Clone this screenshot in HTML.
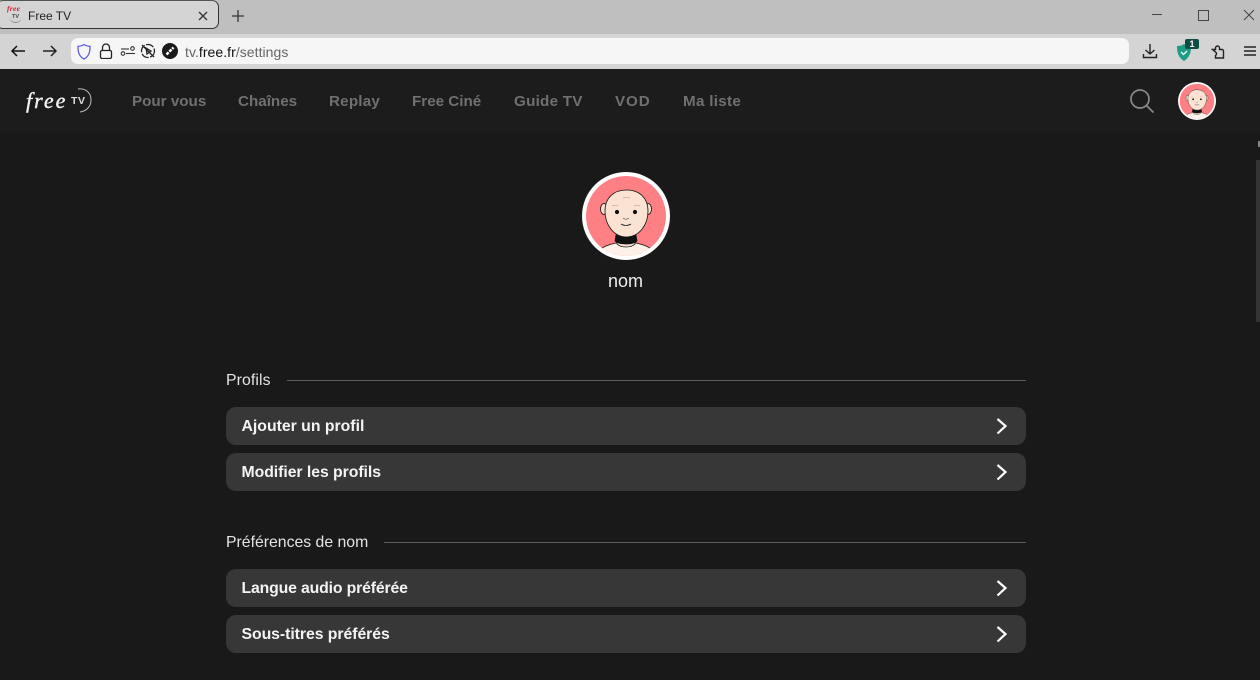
<!DOCTYPE html>
<html lang="fr"><head><meta charset="utf-8"><title>Free TV</title>
<style>
html,body{margin:0;padding:0;width:1260px;height:680px;overflow:hidden;background:#191919;font-family:"Liberation Sans",sans-serif}
.a{position:absolute;white-space:nowrap}
#chrome{position:absolute;left:0;top:0;width:1260px;height:69px;background:#d4d4d4}
#tabbar{position:absolute;left:0;top:0;width:1260px;height:34px;background:#bfbfbf}
#tab{position:absolute;left:-4px;top:0;width:221px;height:27px;background:#d4d4d4;border:1px solid #333;border-top-color:#555;border-radius:7px}
#url{position:absolute;left:71px;top:38px;width:1058px;height:26px;background:#f6f6f6;border-radius:7px}
#hdr{position:absolute;left:0;top:69px;width:1260px;height:64px;background:#1c1c1c;box-sizing:border-box}
.nav{position:absolute;top:92px;font-size:15.2px;line-height:18px;margin-top:1px;font-weight:bold;color:#707070;white-space:nowrap}
.row{position:absolute;left:226px;width:800px;height:38px;background:#373737;border-radius:10px}
.row b{position:absolute;left:15.500px;top:10px;font-size:15.800px;line-height:19px;color:#f4f4f4;white-space:nowrap}
.row svg{position:absolute;left:769px;top:10px}
.sec{position:absolute;left:226px;font-size:15.800px;line-height:18px;color:#e4e4e4;white-space:nowrap}
.ln{position:absolute;height:1px;background:#5a5a5a}
</style></head><body>
<svg width="0" height="0" style="position:absolute"><defs>
<clipPath id="c"><circle cx="44" cy="44" r="40"/></clipPath>
<symbol id="av" viewBox="0 0 88 88">
<circle cx="44" cy="44" r="44" fill="#fff"/>
<circle cx="44" cy="44" r="40" fill="#fe7f84"/>
<g clip-path="url(#c)" stroke="#111" stroke-width=".8">
<path d="M14 88c1-10 6-14 20-17h20c14 3 19 7 20 17z" fill="#fdf0e8"/>
<path d="M35 60h18v12c-4 4-14 4-18 0z" fill="#f9dfcf"/>
<path d="M34 63c5 3 15 3 20 0l1 6c-4 4-18 4-22 0z" fill="#111"/>
<ellipse cx="22" cy="37" rx="3.500" ry="5.500" fill="#f9dfcf"/>
<ellipse cx="66" cy="37" rx="3.500" ry="5.500" fill="#f9dfcf"/>
<path d="M44.500 18c13 0 21.500 8 21.500 21 0 14-9 26-21.500 26S23 53 23 39c0-13 8.500-21 21.500-21z" fill="#fbe3d4"/>
<circle cx="35" cy="40" r="1.700" fill="#111"/><circle cx="53" cy="40" r="1.700" fill="#111"/>
<path d="M41 26c2-.7 5-.7 7 0M30 34c2-1 4-1 6 0M52 34c2-1 4-1 6 0" fill="none" stroke="#c8a898" stroke-width=".7"/>
<path d="M41 46c1 1.500 5 1.500 6 0" fill="none" stroke-width=".5"/>
<path d="M39 52c3 2 7 2 10 0" fill="none" stroke-width=".8"/>
</g></symbol>
<symbol id="chev" viewBox="0 0 14 18"><path d="M2.500 2l8 7-8 7.500" fill="none" stroke="#fff" stroke-width="2.200"/></symbol>
</defs></svg>

<div id="chrome"></div><div id="tabbar"></div><div id="tab"></div>
<div class="a" style="left:7px;top:5px;font:italic bold 7.500px/8px 'Liberation Serif',serif;color:#c4242c;letter-spacing:.3px">free</div>
<div class="a" style="left:10px;top:14px;width:11px;height:8px;font:bold 5.500px/6px 'Liberation Sans',sans-serif;color:#444;text-align:center;border-bottom:1px solid #888;border-radius:50%">TV</div>
<div class="a" style="left:28px;top:9px;font-size:12px;line-height:15px;color:#222">Free TV</div>
<svg class="a" style="left:197px;top:10px" width="12" height="12" fill="none" stroke="#333" stroke-width="1.300"><path d="M2 2l8 8M10 2l-8 8"/></svg>
<svg class="a" style="left:231px;top:9px" width="14" height="14" fill="none" stroke="#333" stroke-width="1.300"><path d="M7 1v12M1 7h12"/></svg>
<svg class="a" style="left:1151px;top:9px" width="12" height="12" fill="none" stroke="#444"><path d="M1 5.500h10"/></svg>
<svg class="a" style="left:1197px;top:9px" width="12" height="12" fill="none" stroke="#444"><rect x="1.500" y="1.500" width="10" height="10"/></svg>
<svg class="a" style="left:1243px;top:9px" width="12" height="12" fill="none" stroke="#444"><path d="M1 1l10 10M11 1L1 11"/></svg>

<svg class="a" style="left:10px;top:44px" width="16" height="14" fill="none" stroke="#111" stroke-width="1.500"><path d="M15 7H2M7 2L2 7l5 5"/></svg>
<svg class="a" style="left:42px;top:44px" width="16" height="14" fill="none" stroke="#222" stroke-width="1.500"><path d="M1 7h13M9 2l5 5-5 5"/></svg>
<div id="url"></div>
<svg class="a" style="left:76px;top:43px" width="16" height="17" fill="none" stroke="#5a5fe0" stroke-width="1.300"><path d="M8 1.500c2 1.300 4 1.800 6 1.800 .2 6-1.500 10.500-6 12.700-4.500-2.200-6.200-6.700-6-12.700 2 0 4-.5 6-1.800z"/></svg>
<svg class="a" style="left:99px;top:43px" width="14" height="16" fill="none" stroke="#222" stroke-width="1.300"><rect x="1.500" y="7.500" width="11" height="8" rx="1.500"/><path d="M3.500 7.500V4.500a3.500 3.500 0 017 0v3"/></svg>
<svg class="a" style="left:120px;top:45px" width="16" height="12" fill="none" stroke="#333" stroke-width="1.100"><path d="M1 4h8"/><circle cx="12.500" cy="3.500" r="1.800"/><circle cx="3" cy="8.500" r="1.800"/><path d="M6 8.500h9"/></svg>
<svg class="a" style="left:140px;top:43px" width="16" height="16" fill="none" stroke="#222" stroke-width="1.300"><circle cx="8" cy="8" r="6.500" stroke-dasharray="8 1.500"/><path d="M2 2l12 12M6 5l5 3-4 3z"/></svg>
<svg class="a" style="left:162px;top:43px" width="16" height="16"><circle cx="8" cy="8" r="8" fill="#1a1a1a"/><path d="M4.500 11.500l7-7" stroke="#fff" stroke-width="2.500" stroke-dasharray="3 1"/></svg>
<div class="a" style="left:185px;top:44px;font-size:14px;line-height:16px;letter-spacing:.05px;color:#666">tv.<span style="color:#111">free.fr</span>/settings</div>

<svg class="a" style="left:1142px;top:43px" width="16" height="16" fill="none" stroke="#222" stroke-width="1.400"><path d="M8 1v10M3.500 7L8 11l4.500-4M1.500 11v3.500h13V11"/></svg>
<svg class="a" style="left:1176px;top:43px" width="16" height="18"><path d="M8 1c2 1.500 4.500 2 7 2 .3 7-2 12-7 15-5-3-7.300-8-7-15 2.500 0 5-.5 7-2z" fill="#1f9c86"/><path d="M5 9l2.500 2.500L11 8" fill="none" stroke="#fff" stroke-width="1.300"/></svg>
<div class="a" style="left:1185px;top:39px;width:14px;height:10px;background:#0f4d42;border-radius:2px;color:#fff;font:bold 9px/10px 'Liberation Sans',sans-serif;text-align:center">1</div>
<svg class="a" style="left:1211px;top:43px" width="15" height="16" fill="none" stroke="#222" stroke-width="1.400"><path d="M1.500 6.500h3V5a2 2 0 014 0v1.500h2.500a1.500 1.500 0 011.500 1.500v7h-8V12.500a2 2 0 000-3.500z"/></svg>
<svg class="a" style="left:1243px;top:45px" width="13" height="12" fill="none" stroke="#222" stroke-width="1.400"><path d="M1 2h12M1 6h12M1 10h12"/></svg>

<div id="hdr"></div>
<div class="a" style="left:26px;top:90px;font:italic 22px/22px 'Liberation Serif',serif;color:#f2f2f2;letter-spacing:2px;-webkit-text-stroke:.4px #f2f2f2">free</div>
<div class="a" style="left:71px;top:95px;font:bold 10.500px/12px 'Liberation Sans',sans-serif;color:#ddd;letter-spacing:.6px">TV</div>
<svg class="a" style="left:70px;top:88px" width="22" height="26" fill="none" stroke="#bbb" stroke-width="1"><path d="M8 1c8-1 13 4 13 11 0 6-4 11-11 12"/></svg>
<div class="nav" style="left:132px">Pour vous</div>
<div class="nav" style="left:238px">Chaînes</div>
<div class="nav" style="left:329px;letter-spacing:.2px">Replay</div>
<div class="nav" style="left:412px">Free Ciné</div>
<div class="nav" style="left:514px;letter-spacing:.25px">Guide TV</div>
<div class="nav" style="left:615px;letter-spacing:.9px">VOD</div>
<div class="nav" style="left:683px;letter-spacing:.3px">Ma liste</div>
<svg class="a" style="left:1129px;top:88px" width="26" height="26" fill="none" stroke="#8a8a8a" stroke-width="1.700"><circle cx="11" cy="11" r="9"/><path d="M17.500 17.500l7 7"/></svg>
<svg class="a" style="left:1178px;top:82px" width="38" height="38"><use href="#av" width="38" height="38"/></svg>

<div class="a" style="left:1256px;top:160px;width:4px;height:162px;background:#333"></div>
<div class="a" style="left:1258px;top:141px;width:2px;height:6px;background:#888"></div>

<svg class="a" style="left:582px;top:172px" width="88" height="88"><use href="#av" width="88" height="88"/></svg>
<div class="a" style="left:526px;width:199px;top:271px;text-align:center;font-size:18px;line-height:20px;color:#eee">nom</div>

<div class="sec" style="top:372px;letter-spacing:.1px">Profils</div>
<div class="ln" style="left:287px;top:380px;width:739px"></div>
<div class="row" style="top:407px"><b>Ajouter un profil</b><svg width="14" height="18"><use href="#chev" width="14" height="18"/></svg></div>
<div class="row" style="top:453px"><b style="letter-spacing:-.05px">Modifier les profils</b><svg width="14" height="18"><use href="#chev" width="14" height="18"/></svg></div>
<div class="sec" style="top:534px">Préférences de nom</div>
<div class="ln" style="left:384px;top:542px;width:642px"></div>
<div class="row" style="top:569px"><b style="letter-spacing:-.15px">Langue audio préférée</b><svg width="14" height="18"><use href="#chev" width="14" height="18"/></svg></div>
<div class="row" style="top:615px"><b style="letter-spacing:-.05px">Sous-titres préférés</b><svg width="14" height="18"><use href="#chev" width="14" height="18"/></svg></div>
</body></html>
